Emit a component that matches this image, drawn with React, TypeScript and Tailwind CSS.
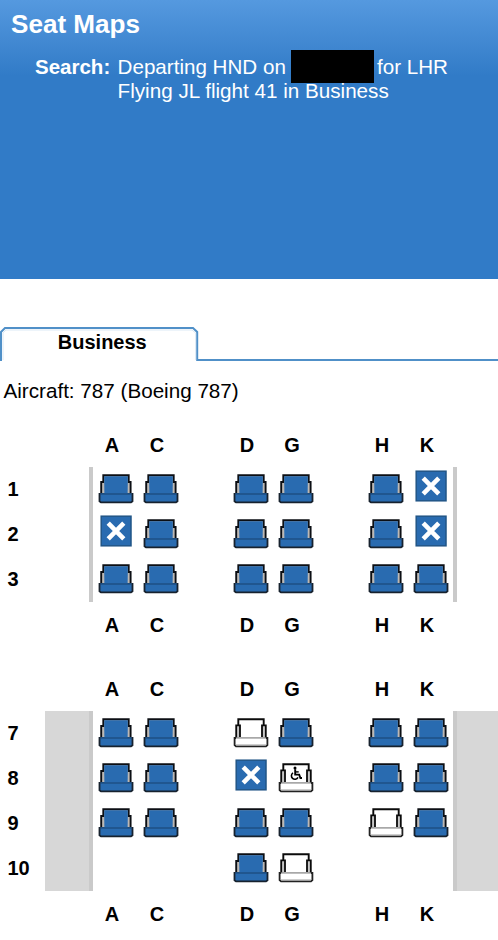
type Kind = 'taken' | 'open' | 'blocked' | 'accessible' | null;

const letters = ['A', 'C', '', 'D', 'G', '', 'H', 'K'];

const T: Kind = 'taken';
const O: Kind = 'open';
const X: Kind = 'blocked';
const W: Kind = 'accessible';

const front: { row: string; seats: Kind[] }[] = [
  { row: '1', seats: [T, T, null, T, T, null, T, X] },
  { row: '2', seats: [X, T, null, T, T, null, T, X] },
  { row: '3', seats: [T, T, null, T, T, null, T, T] },
];

const rear: { row: string; seats: Kind[] }[] = [
  { row: '7', seats: [T, T, null, O, T, null, T, T] },
  { row: '8', seats: [T, T, null, X, W, null, T, T] },
  { row: '9', seats: [T, T, null, T, T, null, O, T] },
  { row: '10', seats: [null, null, null, T, O, null, null, null] },
];

function SeatIcon({ kind }: { kind: Kind }) {
  if (!kind) return null;
  if (kind === 'blocked') {
    return (
      <svg width="45" height="45" viewBox="0 0 45 45">
        <rect x="8.2" y="4.2" width="29.8" height="29.6" fill="#296bb0" stroke="#215587" strokeWidth="1.5" />
        <path d="M15.2 11.2 30.8 26.8M30.8 11.2 15.2 26.8" stroke="#fff" strokeWidth="4.6" />
      </svg>
    );
  }
  if (kind === 'taken') {
    return (
      <svg width="45" height="45" viewBox="0 0 45 45">
        <path d="M10.3 8.2H35.7V15H37.6V27H8.2V15H10.3Z" fill="#bdb9b5" stroke="#0c0f14" strokeWidth="1.9" />
        <path d="M11.2 9.2H34.8V15.5L34.6 27H11.4L11.2 15.5Z" fill="#296bb0" />
        <rect x="6.7" y="26.5" width="32.6" height="8.5" fill="#296bb0" />
        <path d="M7.6 26.8H6.5V34.2L8 35.4H38L39.5 34.2V26.8H38.4" fill="none" stroke="#17222e" strokeWidth="1.8" />
        <path d="M7.5 27H38.5" stroke="#1f5288" strokeWidth="1.6" />
      </svg>
    );
  }
  return (
    <svg width="45" height="45" viewBox="0 0 45 45">
      <path d="M10.3 14.5V8.2H35.7V14.5" fill="#fff" stroke="#0b0b0b" strokeWidth="1.9" />
      <path d="M8.2 27V14.4H12V26M37.8 27V14.4H34V26" fill="#c8c8c8" stroke="#0b0b0b" strokeWidth="1.8" />
      <path d="M8 27H6.6V34.2L8 35.4H38L39.4 34.2V27H38" fill="#fff" stroke="#222" strokeWidth="1.8" />
      <path d="M8 26.9H38" stroke="#8b8b8b" strokeWidth="1.3" />
      <path d="M8 33.8H38" stroke="#bbb" strokeWidth="1" />
      {kind === 'accessible' && (
        <g fill="none" stroke="#000" strokeWidth="1.9">
          <circle cx="22" cy="11.9" r="1.5" fill="#000" stroke="none" />
          <path d="M22.2 13.2V18.6H26.2L27.4 22H29" />
          <path d="M22.2 15.9H25.7" strokeWidth="1.4" />
          <path d="M20 16.8A3.5 3.5 0 1 0 25 21.4" strokeWidth="1.6" />
        </g>
      )}
    </svg>
  );
}

function Letters() {
  return (
    <div className="ml-[93px] grid h-[45px] w-[360px] grid-cols-8">
      {letters.map((l, i) => (
        <div key={i} className="flex items-center justify-center pr-[7px] text-[20px] font-bold">
          {l}
        </div>
      ))}
    </div>
  );
}

function Cabin({ rows, wing }: { rows: typeof front; wing?: boolean }) {
  const side = wing ? 'bg-[#d7d7d7]' : 'bg-white';
  return (
    <div className="flex">
      <div className="w-[45px] shrink-0">
        {rows.map((r) => (
          <div key={r.row} className="flex h-[45px] items-center pb-[2px] pl-[7.5px] text-[20px] font-bold">
            {r.row}
          </div>
        ))}
      </div>
      <div className={`w-[44px] shrink-0 ${side}`} />
      <div className="w-[368px] shrink-0 border-x-4 border-[#cacaca]">
        {rows.map((r) => (
          <div key={r.row} className="grid h-[45px] grid-cols-8">
            {r.seats.map((s, i) => (
              <div key={i} className="h-[45px]">
                <SeatIcon kind={s} />
              </div>
            ))}
          </div>
        ))}
      </div>
      <div className={`flex-1 ${side}`} />
    </div>
  );
}

export default function App() {
  return (
    <div className="h-[940px] w-[498px] overflow-hidden bg-white font-['Liberation_Sans',Arial,sans-serif] text-black">
      <header className="h-[279px] bg-[#317bc7] bg-linear-to-b from-[#5599df] to-[#317bc7] to-[76px] text-white">
        <h1 className="pt-[9px] pl-[11px] text-[26.1px] leading-[30px] font-bold">Seat Maps</h1>
        <div className="flex pt-[16px] pl-[35px] text-[20.6px] leading-[24px]">
          <div className="w-[82px] shrink-0 text-[20.5px] font-bold">Search:</div>
          <div className="pl-[0.6px] whitespace-nowrap">
            <div className="flex h-[24px]">
              <span className="w-[173.4px]">Departing HND on</span>
              <span className="-mt-[5px] mr-[3px] h-[33px] w-[83px] bg-black" />
              <span>for LHR</span>
            </div>
            <div className="relative text-[20.65px]">Flying JL flight 41 in Business</div>
          </div>
        </div>
      </header>

      <div className="mt-[48px] flex h-[34px]">
        <div className="relative w-[198px] shrink-0">
          <svg className="absolute inset-0" width="199" height="34" viewBox="0 0 199 34" fill="none">
            <path d="M1 34V5L5 1H193L197.2 5V34" stroke="#5090c8" strokeWidth="2" />
            <path d="M3 33V6L6 3H192L195.6 6V33" stroke="#dce9f5" strokeWidth="1" />
          </svg>
          <div className="relative pl-[57.8px] text-[20px] leading-[30px] font-bold">Business</div>
        </div>
        <div className="flex-1 border-b-2 border-[#5090c8]" />
      </div>

      <div className="mt-[18px] h-[43px] pl-[3.5px] text-[20.65px] leading-[24px]">Aircraft: 787 (Boeing 787)</div>

      <Letters />
      <Cabin rows={front} />
      <Letters />
      <div className="h-[19px]" />
      <Letters />
      <Cabin rows={rear} wing />
      <Letters />
    </div>
  );
}
